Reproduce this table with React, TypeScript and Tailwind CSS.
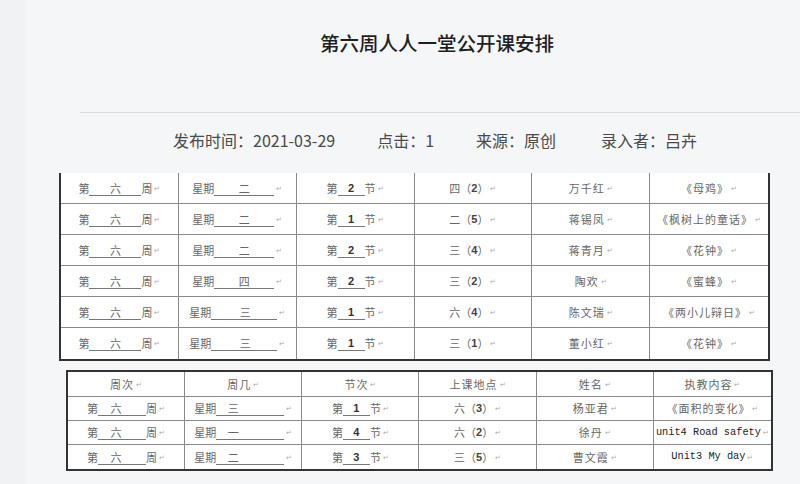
import React from "react";

const cjk = { fontFamily: '"Noto Sans CJK SC", "Liberation Sans", sans-serif' };

type Row = { week: string; day: string; period: string; room: [string, string]; name: string; content: string; latin?: boolean };

const rowsTop: Row[] = [
  { week: "六", day: "二", period: "2", room: ["四", "2"], name: "万千红", content: "《母鸡》" },
  { week: "六", day: "二", period: "1", room: ["二", "5"], name: "蒋锡凤", content: "《枫树上的童话》" },
  { week: "六", day: "二", period: "2", room: ["三", "4"], name: "蒋青月", content: "《花钟》" },
  { week: "六", day: "四", period: "2", room: ["三", "2"], name: "陶欢", content: "《蜜蜂》" },
  { week: "六", day: "三", period: "1", room: ["六", "4"], name: "陈文瑞", content: "《两小儿辩日》" },
  { week: "六", day: "三", period: "1", room: ["三", "1"], name: "董小红", content: "《花钟》" },
];

const rowsBottom: Row[] = [
  { week: "六", day: "三", period: "1", room: ["六", "3"], name: "杨亚君", content: "《面积的变化》" },
  { week: "六", day: "一", period: "4", room: ["六", "2"], name: "徐丹", content: "unit4 Road safety", latin: true },
  { week: "六", day: "二", period: "3", room: ["三", "5"], name: "曹文霞", content: "Unit3 My day", latin: true },
];

// word 里的段落标记
const Mark = () => <span className="ml-[2px] text-[7px] text-[#aaa] leading-none">↵</span>;

function Cells({ r, big }: { r: Row; big?: boolean }) {
  const cell = "flex items-center justify-center border-r border-[#8a8a8a] text-[11px] text-[#666]";
  return (
    <>
      <div className={cell}>
        <span>第</span>
        <span className={`inline-block border-b border-[#777] text-center leading-[14px] ${big ? "w-[52px]" : "w-[48px] pr-[12px]"}`}>{r.week}</span>
        <span>周</span>
        <Mark />
      </div>
      <div className={cell}>
        <span>星期</span>
        <span className={`inline-block border-b border-[#777] text-center leading-[14px] ${r.day === "三" && big ? "w-[66px] pl-[2px]" : big ? "w-[60px]" : "w-[68px] pr-[34px]"}`}>{r.day}</span>
        <Mark />
      </div>
      <div className={cell}>
        <span>第</span>
        <span className="inline-block w-[27px] border-b border-[#777] text-center leading-[14px] font-bold text-[#333]" style={{ fontFamily: '"Liberation Sans", sans-serif' }}>
          {r.period}
        </span>
        <span>节</span>
        <Mark />
      </div>
      <div className={cell}>
        <span>{r.room[0]}</span>
        <span>（</span>
        <span className="font-bold text-[#444]" style={{ fontFamily: '"Liberation Sans", sans-serif' }}>{r.room[1]}</span>
        <span>）</span>
        <Mark />
      </div>
      <div className={cell}>
        <span className="tracking-[1px]">{r.name}</span>
        <Mark />
      </div>
      <div className="flex items-center justify-center text-[11px] text-[#666]">
        {r.latin ? (
          <span className="text-[10.3px] text-[#222]" style={{ fontFamily: '"Liberation Mono", monospace' }}>{r.content}</span>
        ) : (
          <span className="tracking-[1px]">{r.content}</span>
        )}
        <Mark />
      </div>
    </>
  );
}

export default function App() {
  return (
    <div className="w-[800px] h-[484px] overflow-hidden bg-[#f4f6f7] relative" style={cjk}>
      <div className="absolute left-0 top-0 bottom-0 w-[26px] bg-[#f0f2f3]"></div>
      <div className="relative flex flex-col">
        {/* 标题 */}
        <div className="pl-[80px] pr-[6px] pt-[29px] h-[57px]">
          <h1 className="text-center text-[19.5px] leading-[28px] font-medium text-[#1f1f1f]">第六周人人一堂公开课安排</h1>
        </div>
        <div className="mt-[55px] ml-[80px] h-px bg-[#dcdfe1]"></div>
        {/* 发布信息 */}
        <div className="mt-[15px] flex items-center pl-[173px] text-[16px] leading-[24px] text-[#4a4a4a]">
          <span>发布时间：2021-03-29</span>
          <span className="ml-[42px]">点击：1</span>
          <span className="ml-[42px]">来源：原创</span>
          <span className="ml-[45px]">录入者：吕卉</span>
        </div>

        {/* 表格一 */}
        <div className="mt-[21px] ml-[59px] w-[711px] bg-white border-l-2 border-r-2 border-b-2 border-[#333]">
          {rowsTop.map((r, i) => (
            <div key={i} className={`grid grid-cols-6 h-[31px] ${i < rowsTop.length - 1 ? "border-b border-[#8a8a8a]" : ""}`}>
              <Cells r={r} big />
            </div>
          ))}
        </div>

        {/* 表格二 */}
        <div className="mt-[9px] ml-[66px] w-[707px] bg-white border-2 border-[#333]">
          <div className="grid grid-cols-6 h-[25px] border-b border-[#8a8a8a] text-[11px] text-[#666]">
            {["周次", "周几", "节次", "上课地点", "姓名", "执教内容"].map((h, i) => (
              <div key={h} className={`flex items-center justify-center ${i < 5 ? "border-r border-[#8a8a8a]" : ""}`}>
                <span className="tracking-[1px]">{h}</span>
                <Mark />
              </div>
            ))}
          </div>
          {rowsBottom.map((r, i) => (
            <div key={i} className={`grid grid-cols-6 h-[24px] ${i < rowsBottom.length - 1 ? "border-b border-[#8a8a8a]" : ""}`}>
              <Cells r={r} />
            </div>
          ))}
        </div>
      </div>
    </div>
  );
}
